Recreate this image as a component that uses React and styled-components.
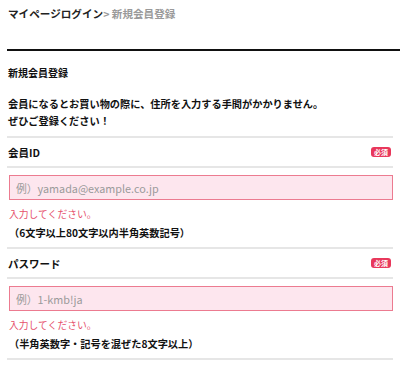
import React from 'react';
import styled, { createGlobalStyle } from 'styled-components';

const GlobalStyle = createGlobalStyle`
  body {
    margin: 0;
    background: #fff;
    font-family: "Noto Sans CJK JP", "Noto Sans", sans-serif;
    color: #111;
  }
`;

const Page = styled.div`
  width: 400px;
  height: 366px;
  overflow: hidden;
`;

const Breadcrumb = styled.div`
  padding: 5px 8px 0;
  height: 22px;
  font-size: 10.6px;
  line-height: 18px;
  font-weight: 700;
  color: #222;

  span {
    color: #9a9a9a;
  }
`;

const Rule = styled.div`
  margin: 22px 0 0 7px;
  height: 2px;
  background: #111;
`;

const Body = styled.div`
  padding: 0 7px;
`;

const Title = styled.h1`
  margin: 14px 0 0 1px;
  font-size: 10px;
  line-height: 16px;
  font-weight: 700;
`;

const Lead = styled.p`
  margin: 14px 0 0 1px;
  font-size: 10.2px;
  line-height: 17px;
  font-weight: 700;
`;

const Field = styled.section`
  border-top: 2px solid #e6e6e6;
  margin-top: ${({ $first }) => ($first ? '7px' : '0')};
`;

const LabelRow = styled.div`
  display: flex;
  align-items: center;
  justify-content: space-between;
  height: 28px;
  padding: 0 2px 0 1px;
  border-bottom: 2px solid #e6e6e6;
`;

const Label = styled.span`
  font-size: 10.5px;
  font-weight: 700;
`;

const Badge = styled.span`
  display: inline-block;
  background: #e8375b;
  color: #fff;
  font-size: 7px;
  font-weight: 700;
  line-height: 10px;
  padding: 0 3px;
  border-radius: 3px;
`;

const Input = styled.input`
  display: block;
  box-sizing: border-box;
  width: 384px;
  height: 25px;
  margin: 7px 0 0 2px;
  padding: 0 6px;
  border: 1px solid #ec7b90;
  background: #fde6ee;
  font-family: "Noto Sans CJK JP", "Noto Sans", sans-serif;
  font-size: 10.8px;
  color: #333;
  outline: none;

  &::placeholder {
    color: #9a9a9a;
  }
`;

const Error = styled.div`
  margin: 5px 0 0 2px;
  font-size: 9.8px;
  line-height: 18px;
  color: #e6506c;
`;

const Note = styled.div`
  margin: 1px 0 5px 2px;
  font-size: 10.2px;
  line-height: 18px;
  font-weight: 700;
`;

const Fields = [
  { label: '会員ID', placeholder: '例）yamada@example.co.jp', note: '（6文字以上80文字以内半角英数記号）' },
  { label: 'パスワード', placeholder: '例）1-kmb!ja', note: '（半角英数字・記号を混ぜた8文字以上）' },
];

export default function App() {
  return (
    <Page>
      <GlobalStyle />
      <Breadcrumb>
        マイページログイン<span>&gt; 新規会員登録</span>
      </Breadcrumb>
      <Rule />
      <Body>
        <Title>新規会員登録</Title>
        <Lead>
          会員になるとお買い物の際に、住所を入力する手間がかかりません。
          <br />
          ぜひご登録ください！
        </Lead>
        {Fields.map((f, i) => (
          <Field key={f.label} $first={i === 0}>
            <LabelRow>
              <Label>{f.label}</Label>
              <Badge>必須</Badge>
            </LabelRow>
            <Input placeholder={f.placeholder} />
            <Error>入力してください。</Error>
            <Note>{f.note}</Note>
          </Field>
        ))}
        <Field />
      </Body>
    </Page>
  );
}
